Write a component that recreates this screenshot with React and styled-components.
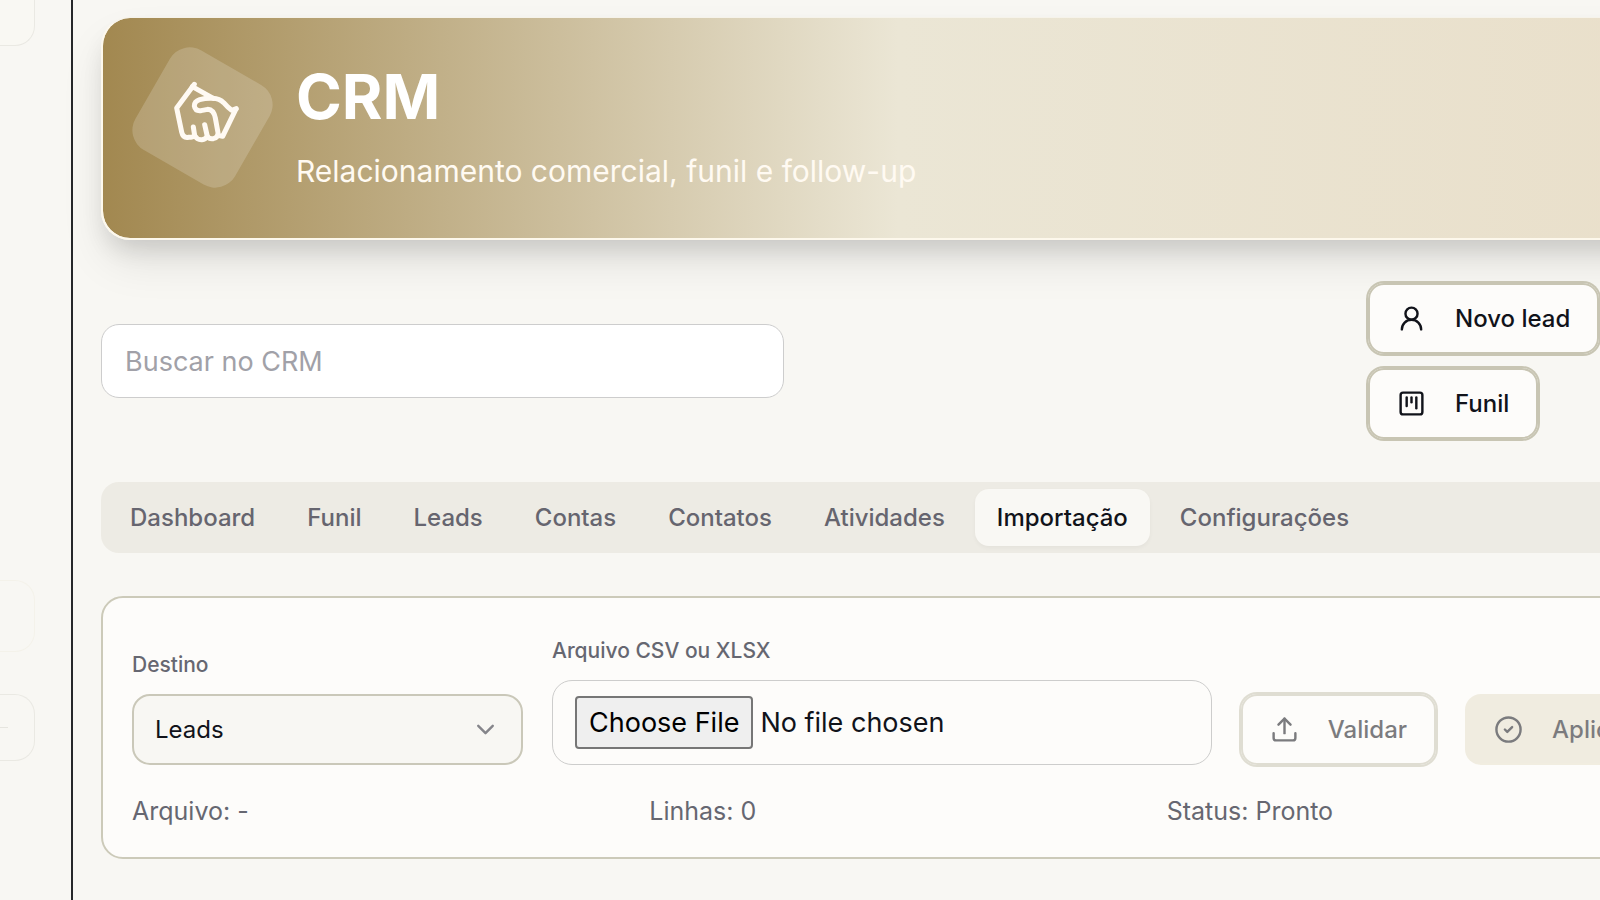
import styled, { createGlobalStyle } from "styled-components";
import {
  ChevronDown,
  CircleCheck,
  SquareKanban,
  Upload,
  UserRound,
} from "lucide-react";

const GlobalStyle = createGlobalStyle`
  * {
    box-sizing: border-box;
  }
  body {
    margin: 0;
    background-color: #f8f7f3;
    color: #11131a;
    font-family: Inter, "Liberation Sans", sans-serif;
    font-size: 25px;
  }
  button, input, select {
    font-family: inherit;
    color: inherit;
  }
`;

const Shell = styled.div`
  display: flex;
  min-height: 100vh;
  overflow: hidden;
`;

const Sidebar = styled.aside`
  flex: 0 0 73px;
  display: flex;
  flex-direction: column;
  gap: 42px;
  padding: 0 36px 139px 0;
  border-right: 2px solid #26282a;
`;

const SideItem = styled.div`
  height: ${(props) => props.$height}px;
  margin-top: ${(props) => (props.$push ? "auto" : "0")};
  display: flex;
  align-items: center;
  border: 1px solid ${(props) => (props.$faint ? "#f4f2ea" : "#eae9e3")};
  border-left: none;
  border-top-width: ${(props) => (props.$open ? "0" : "1px")};
  border-radius: ${(props) => (props.$open ? "0 0 20px 0" : "0 20px 20px 0")};
  background-color: ${(props) => (props.$open ? "#f9f8f3" : "transparent")};
`;

const Dash = styled.span`
  width: 8px;
  height: 1px;
  background-color: #e6e5df;
`;

const Main = styled.main`
  flex: 1;
  min-width: 0;
  padding: 17px 0 41px 28px;
`;

const Content = styled.div`
  display: flex;
  flex-direction: column;
  gap: 43px;
  margin-right: -93px;
`;

const Banner = styled.header`
  display: flex;
  align-items: flex-start;
  gap: 36px;
  padding: 42px;
  border: solid #fdf8ec;
  border-width: 1px 0 2px 2px;
  border-top-color: #f6f3ea;
  border-radius: 29px;
  background: linear-gradient(90deg, #a28850 0%, #ebe6d5 50%, #e9dfca 100%)
    padding-box;
  box-shadow: 0 24px 45px -4px rgba(0, 0, 0, 0.1),
    0 14px 24px -6px rgba(0, 0, 0, 0.12);
`;

const Badge = styled.div`
  position: relative;
  flex: 0 0 115px;
  height: 115px;
  &::before {
    content: "";
    position: absolute;
    inset: 0;
    border-radius: 23px;
    background-color: rgba(255, 255, 255, 0.18);
    transform: rotate(30deg);
  }
`;

const Handshake = styled.svg`
  position: absolute;
  top: 10px;
  left: 20px;
  width: 84px;
  height: 84px;
  fill: none;
  stroke: #fffaf3;
  stroke-width: 15;
  stroke-linecap: round;
  stroke-linejoin: round;
`;

const Title = styled.h1`
  margin: 0 0 12px;
  font-size: 62px;
  line-height: 74px;
  font-weight: 700;
  color: white;
`;

const Subtitle = styled.p`
  margin: 0;
  font-size: 30px;
  line-height: 50px;
  color: #fffaf2;
`;

const Toolbar = styled.div`
  display: flex;
  align-items: center;
  justify-content: space-between;
`;

const Search = styled.input`
  width: 100%;
  max-width: 683px;
  height: 74px;
  padding: 0 23px;
  border: 1px solid #cdcdcd;
  border-radius: 18px;
  background-color: white;
  font-size: 27px;
  &::placeholder {
    color: #a1a1a8;
    opacity: 1;
  }
`;

const Actions = styled.div`
  flex: 0 0 325px;
  display: flex;
  flex-wrap: wrap;
  gap: 14px;
`;

const Button = styled.button`
  display: inline-flex;
  align-items: center;
  gap: 29px;
  height: 71px;
  padding: 0 29px;
  border: none;
  border-radius: 16px;
  background-color: ${(props) => (props.$filled ? "#e7e0cb" : "#fdfcfa")};
  box-shadow: ${(props) =>
    props.$filled ? "none" : "inset 0 0 0 2px #c8c5b3, 0 0 0 2px #c8c5b3"};
  font-size: 24px;
  font-weight: 500;
  white-space: nowrap;
  cursor: pointer;
  &:disabled {
    opacity: 0.55;
    color: #11131a;
    cursor: default;
  }
`;

const Tabs = styled.nav`
  display: flex;
  gap: 8px;
  padding: 7px;
  border-radius: 18px;
  background-color: #edebe4;
`;

const Tab = styled.button`
  height: 57px;
  padding: 0 22px;
  border: none;
  border-radius: 14px;
  background-color: ${(props) => (props.$active ? "#f9f8f4" : "transparent")};
  box-shadow: ${(props) =>
    props.$active ? "0 2px 4px rgba(0, 0, 0, 0.04)" : "none"};
  color: ${(props) => (props.$active ? "#11131a" : "#66656f")};
  font-size: 24px;
  font-weight: 500;
  cursor: pointer;
`;

const Card = styled.section`
  display: flex;
  flex-direction: column;
  gap: 28px;
  padding: 38px 29px 28px;
  border: 2px solid #cccab9;
  border-radius: 22px;
  background-color: #fdfcfa;
`;

const Form = styled.form`
  display: grid;
  grid-template-columns: 391px 1fr auto auto;
  align-items: end;
  gap: 29px;
`;

const Field = styled.div`
  display: flex;
  flex-direction: column;
  gap: 14px;
`;

const Label = styled.label`
  font-size: 21px;
  line-height: 30px;
  font-weight: 500;
  color: #666771;
`;

const SelectWrap = styled.div`
  position: relative;
  svg {
    position: absolute;
    top: 21px;
    right: 23px;
    color: #85858a;
    pointer-events: none;
  }
`;

const Select = styled.select`
  display: block;
  width: 100%;
  height: 71px;
  padding: 0 21px;
  appearance: none;
  border: 2px solid #cac8b9;
  border-radius: 18px;
  background-color: #f8f7f3;
  font-size: 24px;
`;

const FileInput = styled.input`
  width: 100%;
  height: 85px;
  padding: 15px 22px;
  border: 1px solid #cdcdcc;
  border-radius: 20px;
  font-size: 27px;
  &::file-selector-button {
    height: 53px;
    margin-right: 7px;
    padding: 0 12px;
    border: 2px solid #767676;
    border-radius: 4px;
    background-color: #efefef;
    color: black;
    font-family: inherit;
    font-size: 27px;
  }
`;

const Summary = styled.div`
  display: grid;
  grid-template-columns: repeat(3, 1fr);
  gap: 22px;
  line-height: 36px;
  color: #666771;
`;

const tabs = [
  "Dashboard",
  "Funil",
  "Leads",
  "Contas",
  "Contatos",
  "Atividades",
  "Importação",
  "Configurações",
];

const App = () => {
  return (
    <Shell>
      <GlobalStyle />
      <Sidebar>
        <SideItem $height={46} $open />
        <SideItem $height={72} $push $faint />
        <SideItem $height={67}>
          <Dash />
        </SideItem>
      </Sidebar>
      <Main>
        <Content>
          <Banner>
            <Badge>
              <Handshake viewBox="0 0 252 252" aria-hidden="true">
                <path d="M88 43 L35 114 L50 186 Q54 205 71 202 Q84 202 89 197 L85 171" />
                <path d="M89 197 Q96 210 111 209 Q122 208 127 199 L119 164" />
                <path d="M127 199 Q133 208 145 206 Q160 203 159 188 L151 144 Q146 119 128 118 L108 122 Q91 124 88 108 Q88 94 104 89 Q123 84 143 85 Q164 86 176 98 Q189 113 200 121 L214 116" />
                <path d="M82 50 L145 85" />
                <path d="M212 119 L173 199 L159 196" />
              </Handshake>
            </Badge>
            <div>
              <Title>CRM</Title>
              <Subtitle>Relacionamento comercial, funil e follow-up</Subtitle>
            </div>
          </Banner>
          <Toolbar>
            <Search
              type="text"
              placeholder="Buscar no CRM"
              aria-label="Buscar no CRM"
            />
            <Actions>
              <Button type="button">
                <UserRound size={29} />
                Novo lead
              </Button>
              <Button type="button">
                <SquareKanban size={29} />
                Funil
              </Button>
            </Actions>
          </Toolbar>
          <Tabs>
            {tabs.map((tab) => (
              <Tab key={tab} type="button" $active={tab === "Importação"}>
                {tab}
              </Tab>
            ))}
          </Tabs>
          <Card>
            <Form>
              <Field>
                <Label htmlFor="destino">Destino</Label>
                <SelectWrap>
                  <Select id="destino" defaultValue="Leads">
                    <option>Leads</option>
                  </Select>
                  <ChevronDown size={29} />
                </SelectWrap>
              </Field>
              <Field>
                <Label htmlFor="arquivo">Arquivo CSV ou XLSX</Label>
                <FileInput id="arquivo" type="file" accept=".csv,.xlsx" />
              </Field>
              <Button type="button" disabled>
                <Upload size={29} />
                Validar
              </Button>
              <Button type="button" $filled disabled>
                <CircleCheck size={29} />
                Aplicar
              </Button>
            </Form>
            <Summary>
              <span>Arquivo: -</span>
              <span>Linhas: 0</span>
              <span>Status: Pronto</span>
            </Summary>
          </Card>
        </Content>
      </Main>
    </Shell>
  );
};

export default App;
